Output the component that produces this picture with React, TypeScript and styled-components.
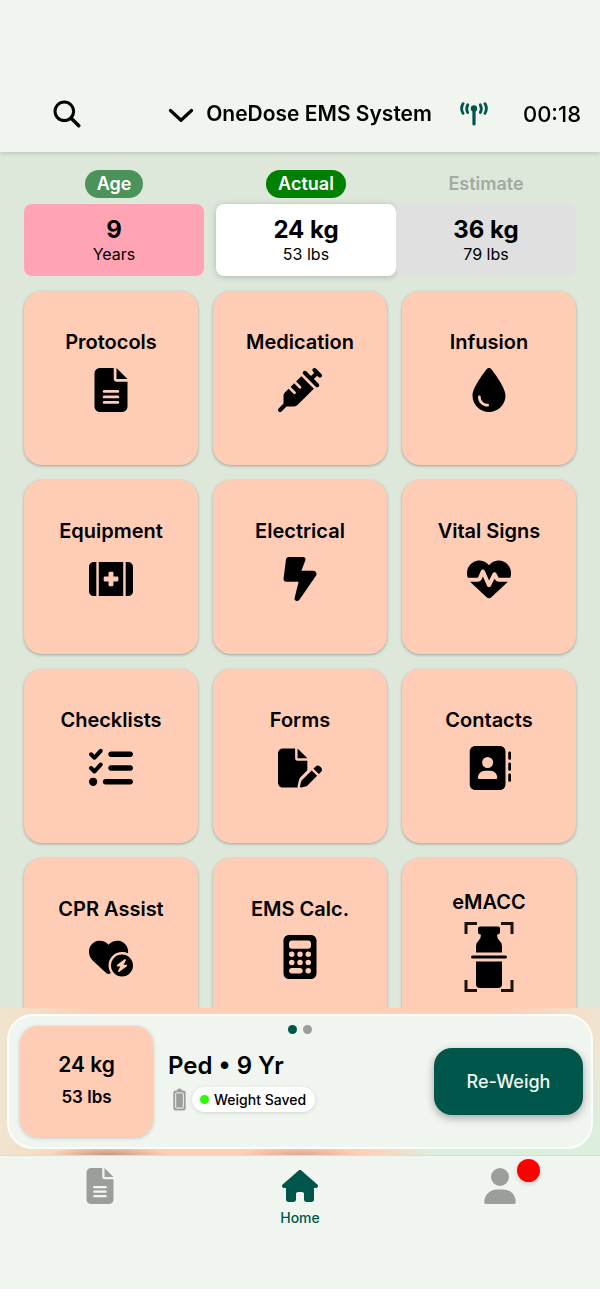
import React from 'react';
import styled, { createGlobalStyle } from 'styled-components';
import {
  FaAddressBook,
  FaBoltLightning,
  FaCalculator,
  FaDroplet,
  FaFileLines,
  FaFilePen,
  FaHeartCircleBolt,
  FaHeartPulse,
  FaHouse,
  FaKitMedical,
  FaListCheck,
  FaSyringe,
  FaUser,
} from 'react-icons/fa6';

const GlobalStyle = createGlobalStyle`
  * {
    box-sizing: border-box;
  }

  body {
    margin: 0;
    background: #fff;
    color: #000;
    font-family: Inter, "Liberation Sans", sans-serif;
  }

  button {
    border: none;
    margin: 0;
    padding: 0;
    background: none;
    color: inherit;
    font: inherit;
    cursor: pointer;
  }

  svg {
    display: block;
  }
`;

const Screen = styled.div`
  display: flex;
  flex-direction: column;
  height: 100vh;
  padding-bottom: 10px;
`;

const Header = styled.header`
  display: grid;
  grid-template-columns: 134px 1fr auto auto;
  align-items: center;
  padding: 76px 19px 0 0;
  height: 152px;
  flex-shrink: 0;
  background: #f0f5ef;
  box-shadow: 0 1px 5px rgba(0, 0, 0, 0.18);
  z-index: 1;
`;

const SearchButton = styled.button`
  justify-self: center;
`;

const SystemPicker = styled.button`
  display: flex;
  align-items: center;
  justify-content: flex-end;
  gap: 12px;
  font-size: 21px;
  line-height: 26px;
  font-weight: 600;
  white-space: nowrap;
`;

const ConnectionIcon = styled.span`
  margin: 0 35px 0 28px;
`;

const Timer = styled.time`
  font-size: 22px;
  line-height: 24px;
  font-weight: 500;
`;

const Main = styled.main`
  flex: 1;
  min-height: 0;
  overflow-y: auto;
  scrollbar-width: none;
  padding: 18px 24px 0;
  background: #dde8db;
`;

const Measures = styled.section`
  display: grid;
  grid-template-columns: calc((100% - 12px) / 3) 1fr;
  gap: 12px;
  margin-bottom: 15px;
`;

const WeightGroup = styled.div`
  display: grid;
  grid-template-columns: 1fr 1fr;
`;

const Measure = styled.div`
  display: flex;
  flex-direction: column;
  align-items: center;
  gap: 6px;
`;

const Pill = styled.span<{ $bg: string; $color?: string }>`
  padding: 0 12px;
  border-radius: 14px;
  background: ${({ $bg }) => $bg};
  color: ${({ $color }) => $color || '#fff'};
  font-size: 18px;
  line-height: 28px;
  font-weight: 600;
`;

const MeasureCard = styled.button<{ $bg: string; $raised?: boolean }>`
  display: flex;
  flex-direction: column;
  align-items: center;
  justify-content: center;
  width: 100%;
  height: 72px;
  border-radius: 8px;
  background: ${({ $bg }) => $bg};
  box-shadow: ${({ $raised }) => ($raised ? '0 1px 6px rgba(0, 0, 0, 0.22)' : 'none')};
`;

const MeasureValue = styled.strong`
  font-size: 24px;
  line-height: 28px;
  font-weight: 700;
`;

const MeasureUnit = styled.span`
  font-size: 16px;
  line-height: 20px;
`;

const TileGrid = styled.section`
  display: grid;
  grid-template-columns: repeat(3, 1fr);
  gap: 15px;
`;

const Tile = styled.button<{ $tall?: boolean }>`
  display: flex;
  flex-direction: column;
  align-items: center;
  justify-content: center;
  aspect-ratio: 1;
  padding: ${({ $tall }) => ($tall ? '0 0 7px' : '0 0 14px')};
  gap: ${({ $tall }) => ($tall ? '7px' : '14px')};
  border-radius: 18px;
  background: #ffcdb6;
  box-shadow: 0 1px 3px rgba(0, 0, 0, 0.3);
  font-size: 20px;
  line-height: 24px;
  font-weight: 600;
`;

const Dock = styled.section`
  flex-shrink: 0;
  padding: 6px 7px;
  background:
    radial-gradient(ellipse 10% 9px at 18% 100%, rgba(130, 80, 60, 0.45), transparent),
    radial-gradient(ellipse 10% 9px at 50% 100%, rgba(170, 90, 70, 0.35), transparent),
    linear-gradient(90deg, rgba(220, 238, 220, 0) 60%, #dceedc 72%) 0 100% / 100% 8px no-repeat,
    linear-gradient(180deg, rgba(220, 238, 220, 0) 20%, #dceedc 80%) 100% 0 / 24px 100% no-repeat,
    linear-gradient(90deg, #f0e5cf 0%, #ffceb5 16%, #ffceb5 84%, #f0e5cf 100%);
`;

const DockCard = styled.div`
  position: relative;
  display: flex;
  align-items: center;
  height: 135px;
  padding: 0 8px 0 11px;
  border: 2px solid #fbfdfa;
  border-radius: 26px;
  background: #f0f5ef;
`;

const PageDots = styled.div`
  position: absolute;
  top: 9px;
  left: 0;
  right: 0;
  display: flex;
  justify-content: center;
  gap: 6px;
`;

const Dot = styled.span<{ $color: string }>`
  width: 9px;
  height: 9px;
  border-radius: 50%;
  background: ${({ $color }) => $color};
`;

const WeightTile = styled.div`
  display: flex;
  flex-direction: column;
  align-items: center;
  justify-content: center;
  gap: 8px;
  width: 133px;
  height: 111px;
  padding-bottom: 2px;
  border-radius: 18px;
  background: #ffcdb6;
  box-shadow: 0 1px 4px rgba(0, 0, 0, 0.2);
  font-weight: 600;
`;

const WeightKg = styled.span`
  font-size: 21px;
  line-height: 24px;
`;

const WeightLbs = styled.span`
  font-size: 17px;
  line-height: 24px;
`;

const Patient = styled.div`
  flex: 1;
  padding-left: 15px;
`;

const PatientName = styled.h2`
  margin: 0 0 6px;
  font-size: 24px;
  line-height: 30px;
  font-weight: 600;
`;

const StatusRow = styled.div`
  display: flex;
  align-items: center;
  gap: 6px;
  padding-left: 5px;
`;

const Status = styled.span`
  display: flex;
  align-items: center;
  gap: 5px;
  padding: 0 9px 0 8px;
  border-radius: 13px;
  background: #fff;
  box-shadow: 0 1px 4px rgba(0, 0, 0, 0.12);
  font-size: 14px;
  line-height: 25px;
  font-weight: 500;
`;

const ReWeighButton = styled.button`
  width: 149px;
  height: 67px;
  border-radius: 18px;
  background: #00564a;
  color: #f0f5ef;
  box-shadow: 0 3px 8px rgba(0, 0, 0, 0.32);
  font-size: 18px;
  font-weight: 500;
`;

const TabBar = styled.nav`
  display: grid;
  grid-template-columns: repeat(3, 1fr);
  flex-shrink: 0;
  height: 134px;
  padding-top: 12px;
  border-top: 1px solid #d9dfd8;
  background: #f0f5ef;
`;

const Tab = styled.a<{ $active?: boolean }>`
  display: flex;
  flex-direction: column;
  align-items: center;
  gap: 6px;
  color: ${({ $active }) => ($active ? '#00564a' : '#9c9e9b')};
  font-size: 14px;
  line-height: 16px;
  font-weight: 500;
  text-decoration: none;
`;

const TabIcon = styled.span`
  position: relative;
`;

const Badge = styled.span`
  position: absolute;
  top: -9px;
  left: 35px;
  width: 23px;
  height: 23px;
  border-radius: 50%;
  background: #f00;
  box-shadow: 0 2px 4px rgba(0, 0, 0, 0.15);
`;

const SearchIcon = () => (
  <svg width="28" height="28" viewBox="0 0 28 28" fill="none" stroke="#000" strokeLinecap="round">
    <circle cx="11.3" cy="11.3" r="9.3" strokeWidth="3" />
    <path d="M18.2 18.2 25.8 25.8" strokeWidth="3.4" />
  </svg>
);

const ChevronIcon = () => (
  <svg width="26" height="16" viewBox="0 0 26 16" fill="none" stroke="#000">
    <path d="M2.5 4.5 13 14.2 23.5 4.5" strokeWidth="3.2" strokeLinecap="round" strokeLinejoin="round" />
  </svg>
);

const AntennaIcon = () => (
  <svg width="28" height="24" viewBox="0 0 28 24" fill="none" stroke="#00564a" strokeLinecap="round">
    <circle cx="14" cy="6.5" r="3.2" fill="#00564a" stroke="none" />
    <path d="M14 7v15" strokeWidth="3.2" />
    <path d="M7.7 2.8q-2 3.9 0 7.8M20.3 2.8q2 3.9 0 7.8" strokeWidth="2.8" />
    <path d="M3.1 1.6q-3 4.9 0 9.8M24.9 1.6q3 4.9 0 9.8" strokeWidth="2.8" />
  </svg>
);

const VialScanIcon = () => (
  <svg width="50" height="72" viewBox="0 0 50 72">
    <path d="M2 13V2.5H13M37 2.5H48V13M2 59V69.5H13M37 69.5H48V59" fill="none" stroke="#1c120c" strokeWidth="3" />
    <path d="M16 5.5h18q2 0 2 2V11q0 2-2 2.5l-1 .3q0 4 2.5 6 2.5 2 2.5 5.2v6.5H12V25q0-3.2 2.5-5.2 2.5-2 2.5-6l-1-.3q-2-.5-2-2.5V7.5q0-2 2-2z" />
    <path d="M8.5 36h33" stroke="#000" strokeWidth="3" strokeLinecap="round" />
    <path d="M12 40.5h26V63q0 4-4 4H16q-4 0-4-4z" />
  </svg>
);

const BatteryIcon = () => (
  <svg width="13" height="23" viewBox="0 0 13 23">
    <path
      d="M4 2.5Q4 .5 6.5 .5T9 2.5h1.5q2.2 0 2.2 2.2V20q0 2.5-2.2 2.5h-8Q.3 22.5.3 20V4.7q0-2.2 2.2-2.2z"
      fill="#9c9e9b"
    />
    <rect x="2.7" y="4.9" width="7.6" height="15.2" rx="0.6" fill="none" stroke="#f0f5ef" />
  </svg>
);

const tiles = [
  { title: 'Protocols', icon: <FaFileLines size={44} /> },
  { title: 'Medication', icon: <FaSyringe size={44} /> },
  { title: 'Infusion', icon: <FaDroplet size={44} /> },
  { title: 'Equipment', icon: <FaKitMedical size={44} /> },
  { title: 'Electrical', icon: <FaBoltLightning size={44} /> },
  { title: 'Vital Signs', icon: <FaHeartPulse size={44} /> },
  { title: 'Checklists', icon: <FaListCheck size={44} /> },
  { title: 'Forms', icon: <FaFilePen size={44} /> },
  { title: 'Contacts', icon: <FaAddressBook size={44} /> },
  { title: 'CPR Assist', icon: <FaHeartCircleBolt size={44} /> },
  { title: 'EMS Calc.', icon: <FaCalculator size={44} /> },
  { title: 'eMACC', icon: <VialScanIcon />, tall: true },
];

const App: React.FC = () => {
  return (
    <Screen>
      <GlobalStyle />
      <Header>
        <SearchButton aria-label="Search">
          <SearchIcon />
        </SearchButton>
        <SystemPicker>
          <ChevronIcon />
          OneDose EMS System
        </SystemPicker>
        <ConnectionIcon>
          <AntennaIcon />
        </ConnectionIcon>
        <Timer>00:18</Timer>
      </Header>

      <Main>
        <Measures>
          <Measure>
            <Pill $bg="#4b935b">Age</Pill>
            <MeasureCard $bg="#ffa3b5">
              <MeasureValue>9</MeasureValue>
              <MeasureUnit>Years</MeasureUnit>
            </MeasureCard>
          </Measure>
          <WeightGroup>
            <Measure>
              <Pill $bg="#008000">Actual</Pill>
              <MeasureCard $bg="#fff" $raised>
                <MeasureValue>24 kg</MeasureValue>
                <MeasureUnit>53 lbs</MeasureUnit>
              </MeasureCard>
            </Measure>
            <Measure>
              <Pill $bg="transparent" $color="#a2aaa1">Estimate</Pill>
              <MeasureCard $bg="#dfe0df">
                <MeasureValue>36 kg</MeasureValue>
                <MeasureUnit>79 lbs</MeasureUnit>
              </MeasureCard>
            </Measure>
          </WeightGroup>
        </Measures>

        <TileGrid>
          {tiles.map(({ title, icon, tall }) => (
            <Tile key={title} $tall={tall}>
              {title}
              {icon}
            </Tile>
          ))}
        </TileGrid>
      </Main>

      <Dock>
        <DockCard>
          <PageDots>
            <Dot $color="#00564a" />
            <Dot $color="#9c9e9b" />
          </PageDots>
          <WeightTile>
            <WeightKg>24 kg</WeightKg>
            <WeightLbs>53 lbs</WeightLbs>
          </WeightTile>
          <Patient>
            <PatientName>Ped • 9 Yr</PatientName>
            <StatusRow>
              <BatteryIcon />
              <Status>
                <Dot $color="#2bff00" />
                Weight Saved
              </Status>
            </StatusRow>
          </Patient>
          <ReWeighButton>Re-Weigh</ReWeighButton>
        </DockCard>
      </Dock>

      <TabBar>
        <Tab href="#protocols" aria-label="Protocols">
          <FaFileLines size={36} />
        </Tab>
        <Tab href="#home" $active>
          <FaHouse size={36} />
          Home
        </Tab>
        <Tab href="#profile" aria-label="Profile">
          <TabIcon>
            <FaUser size={36} />
            <Badge />
          </TabIcon>
        </Tab>
      </TabBar>
    </Screen>
  );
};

export default App;
